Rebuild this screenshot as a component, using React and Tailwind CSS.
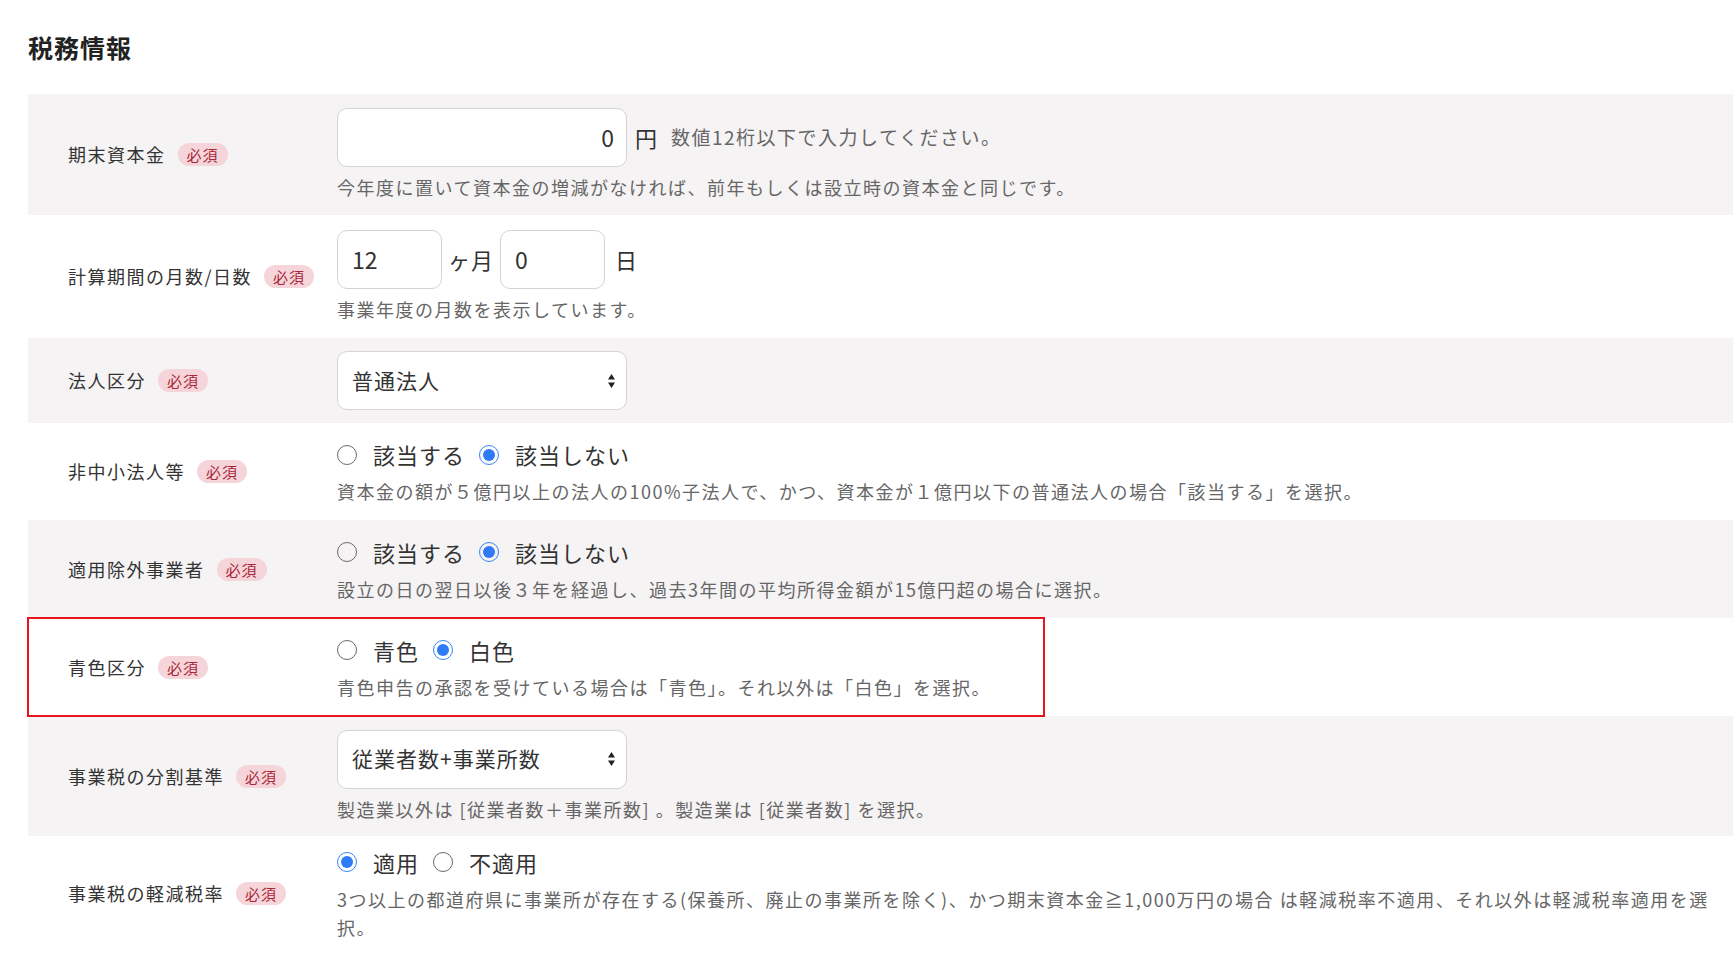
function Badge() {
  return (
    <span className="ml-3 inline-block rounded-full bg-[#f6d5da] px-[9px] py-[1px] text-[15px] leading-[21px] tracking-[1px] text-[#a8283a]">
      必須
    </span>
  );
}

function Radio({ checked, label }) {
  return (
    <span className="mr-[14px] inline-flex items-center">
      <span
        className={
          "mr-[16px] inline-flex h-[20px] w-[20px] items-center justify-center rounded-full border-[1.5px] " +
          (checked ? "border-[#3b82f6]" : "border-[#6b6b6b]")
        }
      >
        {checked && <span className="h-[12px] w-[12px] rounded-full bg-[#2f7bf5]" />}
      </span>
      <span className="text-[22px] tracking-[1px] text-[#333]">{label}</span>
    </span>
  );
}

function Row({ label, gray, h, children, boxed }) {
  return (
    <div
      className={
        "flex " +
        (gray ? "bg-[#f5f3f4] " : "bg-white ") +
        (boxed ? "w-[1016px] outline-2 outline-[#e8141e] -outline-offset-1" : "")
      }
      style={{ minHeight: h }}
    >
      <div className="flex w-[309px] shrink-0 items-center pl-[40px] text-[18px] tracking-[1.5px] text-[#333]">
        {label}
        <Badge />
      </div>
      <div className="flex flex-col justify-center py-2 pr-2">{children}</div>
    </div>
  );
}

const Help = ({ children }) => (
  <div className="mt-[6px] text-[18px] leading-[28px] tracking-[1.5px] text-[#666]">{children}</div>
);

function SelectBox({ value }) {
  return (
    <div className="flex h-[59px] w-[290px] items-center justify-between rounded-[10px] border border-[#d4d4d4] bg-white pl-[14px] pr-[10px] text-[21px] tracking-[1px] text-[#333]">
      <span>{value}</span>
      <svg width="9" height="18" viewBox="0 0 9 18">
        <path d="M4.5 2 L8 7.5 L1 7.5 Z M4.5 16 L8 10.5 L1 10.5 Z" fill="#222" />
      </svg>
    </div>
  );
}

export default function App() {
  return (
    <div
      className="h-[957px] w-[1733px] overflow-hidden bg-white"
      style={{ fontFamily: '"Noto Sans CJK JP", "Noto Sans", sans-serif' }}
    >
      <h1 className="pl-[28px] pt-[30px] pb-[30px] text-[25px] font-bold leading-[34px] tracking-[1px] text-[#222]">
        税務情報
      </h1>
      <div className="ml-[28px]">
        <Row label="期末資本金" gray h={121}>
          <div className="flex items-center">
            <div className="flex h-[59px] w-[290px] items-center justify-end rounded-[10px] border border-[#d4d4d4] bg-white pr-[12px] text-[23px] text-[#333]">
              0
            </div>
            <span className="ml-[8px] text-[22px] text-[#333]">円</span>
            <span className="ml-[14px] text-[19px] tracking-[1.5px] text-[#666]">数値12桁以下で入力してください。</span>
          </div>
          <Help>今年度に置いて資本金の増減がなければ、前年もしくは設立時の資本金と同じです。</Help>
        </Row>
        <Row label="計算期間の月数/日数" h={123}>
          <div className="flex items-center text-[22px] text-[#333]">
            <div className="flex h-[59px] w-[105px] items-center rounded-[10px] border border-[#d4d4d4] pl-[14px] text-[23px]">12</div>
            <span className="mx-[6px] tracking-[1px]">ヶ月</span>
            <div className="flex h-[59px] w-[105px] items-center rounded-[10px] border border-[#d4d4d4] pl-[14px] text-[23px]">0</div>
            <span className="ml-[10px]">日</span>
          </div>
          <Help>事業年度の月数を表示しています。</Help>
        </Row>
        <Row label="法人区分" gray h={85}>
          <SelectBox value="普通法人" />
        </Row>
        <Row label="非中小法人等" h={97}>
          <div className="flex items-center">
            <Radio label="該当する" />
            <Radio checked label="該当しない" />
          </div>
          <Help>資本金の額が５億円以上の法人の100%子法人で、かつ、資本金が１億円以下の普通法人の場合「該当する」を選択。</Help>
        </Row>
        <Row label="適用除外事業者" gray h={98}>
          <div className="flex items-center">
            <Radio label="該当する" />
            <Radio checked label="該当しない" />
          </div>
          <Help>設立の日の翌日以後３年を経過し、過去3年間の平均所得金額が15億円超の場合に選択。</Help>
        </Row>
        <Row label="青色区分" h={98} boxed>
          <div className="flex items-center">
            <Radio label="青色" />
            <Radio checked label="白色" />
          </div>
          <Help>青色申告の承認を受けている場合は「青色」。それ以外は「白色」を選択。</Help>
        </Row>
        <Row label="事業税の分割基準" gray h={120}>
          <SelectBox value="従業者数+事業所数" />
          <Help>製造業以外は [従業者数＋事業所数] 。製造業は [従業者数] を選択。</Help>
        </Row>
        <Row label="事業税の軽減税率" h={114}>
          <div className="flex items-center">
            <Radio checked label="適用" />
            <Radio label="不適用" />
          </div>
          <Help>3つ以上の都道府県に事業所が存在する(保養所、廃止の事業所を除く)、かつ期末資本金≧1,000万円の場合 は軽減税率不適用、それ以外は軽減税率適用を選択。</Help>
        </Row>
      </div>
    </div>
  );
}
